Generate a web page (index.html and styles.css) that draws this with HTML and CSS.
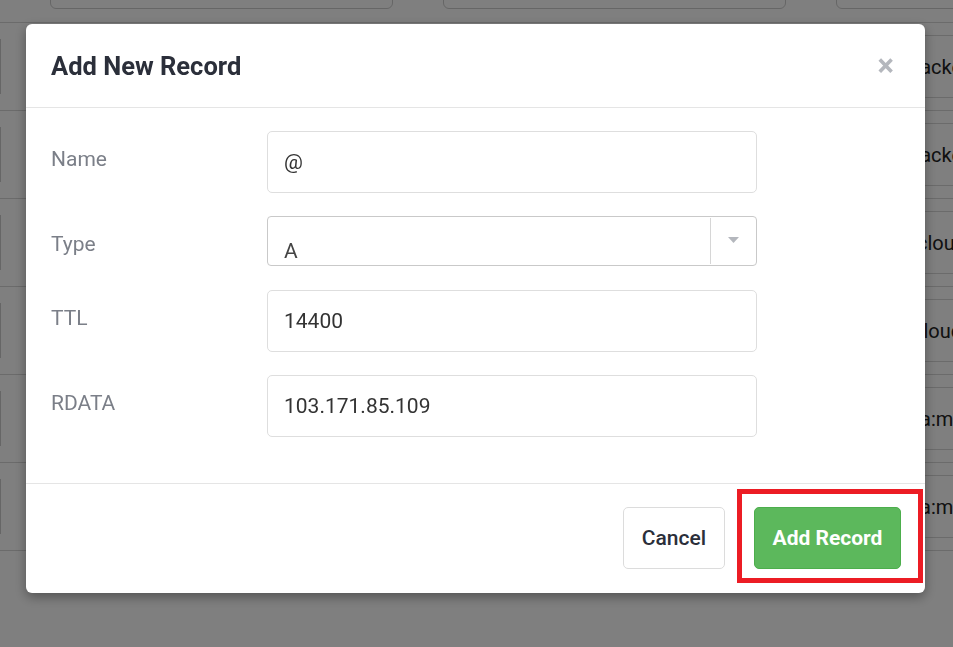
FILE: index.html
```html
<!DOCTYPE html>
<html lang="en">
<head>
<meta charset="utf-8">
<title>Add New Record</title>
<link rel="stylesheet" href="styles.css">
</head>
<body>
<div class="page">
  <div class="topbar">
    <div class="topbox"></div>
    <div class="topbox"></div>
    <div class="topbox wide"></div>
  </div>
  <div class="row"><div class="lbox"></div><div class="rbox"><span>backend</span></div></div>
  <div class="row"><div class="lbox"></div><div class="rbox"><span>backend</span></div></div>
  <div class="row"><div class="lbox"></div><div class="rbox"><span class="shift-lg">cloud</span></div></div>
  <div class="row"><div class="lbox"></div><div class="rbox"><span class="shift-sm">cloud</span></div></div>
  <div class="row"><div class="lbox"></div><div class="rbox"><span>ha:mx</span></div></div>
  <div class="row"><div class="lbox"></div><div class="rbox"><span>ha:mx</span></div></div>
</div>

<div class="overlay">
  <div class="modal">
    <div class="modal-header">
      <h4 class="modal-title">Add New Record</h4>
      <span class="close">&times;</span>
    </div>
    <div class="modal-body">
      <div class="group">
        <label class="label">Name</label>
        <div class="input">@</div>
      </div>
      <div class="group group-type">
        <label class="label">Type</label>
        <div class="select">
          <span class="select-value">A</span>
          <span class="select-arrow"><svg width="11" height="6" viewBox="0 0 11 6"><path d="M0 0H11L5.5 6Z" fill="#b4b7bd"/></svg></span>
        </div>
      </div>
      <div class="group">
        <label class="label">TTL</label>
        <div class="input">14400</div>
      </div>
      <div class="group">
        <label class="label">RDATA</label>
        <div class="input">103.171.85.109</div>
      </div>
    </div>
    <div class="modal-footer">
      <button class="btn btn-default">Cancel</button>
      <button class="btn btn-success">Add Record</button>
      <div class="highlight"></div>
    </div>
  </div>
</div>
</body>
</html>
```

FILE: styles.css
```css
* { box-sizing: border-box; }
html, body { margin: 0; padding: 0; }
body {
  width: 953px;
  height: 647px;
  overflow: hidden;
  font-family: Roboto, "Liberation Sans", Arial, sans-serif;
  background: #fff;
  color: #333;
}

/* background page */
.page { width: 953px; overflow: hidden; }
.topbar {
  height: 23px;
  border-bottom: 1px solid #d6d6d6;
  display: flex;
  gap: 50px;
  padding-left: 50px;
  overflow: hidden;
}
.topbox {
  width: 343px;
  height: 30px;
  margin-top: -21px;
  border: 1px solid #ccc;
  border-radius: 6px;
  flex: none;
}
.topbox.wide { width: 300px; }
.row {
  height: 88px;
  border-bottom: 1px solid #d6d6d6;
  display: flex;
  justify-content: space-between;
}
.lbox {
  width: 1px;
  margin-top: 16px;
  height: 55px;
  background: #ccc;
}
.rbox {
  margin-top: 12px;
  height: 63px;
  width: 40px;
  overflow: hidden;
  border-top: 1px solid #d6d6d6;
  border-bottom: 1px solid #d6d6d6;
  display: flex;
  align-items: center;
  font-size: 20px;
  color: #222;
  white-space: nowrap;
}
.rbox span { margin-left: -4px; }
.rbox span.shift-lg { margin-left: 4px; }
.rbox span.shift-sm { margin-left: 0; }

/* overlay + modal */
.overlay {
  position: fixed;
  inset: 0;
  background: rgba(0, 0, 0, 0.5);
  padding: 24px 0 0 26px;
}
.modal {
  width: 899px;
  background: #fff;
  border-radius: 6px;
  box-shadow: 0 4px 12px rgba(0, 0, 0, 0.35);
}
.modal-header {
  height: 84px;
  border-bottom: 1px solid #e5e5e5;
  display: flex;
  align-items: center;
  justify-content: space-between;
  padding: 0 31px 0 25px;
}
.modal-title {
  margin: 0;
  font-size: 25.5px;
  font-weight: 700;
  color: #2b2f3a;
  line-height: 1;
  padding-top: 2px;
}
.close {
  font-size: 31px;
  font-weight: 700;
  color: #b4b7bd;
  line-height: 1;
  margin-top: 0;
}
.modal-body {
  padding: 23px 25px 23px;
}
.group {
  display: grid;
  grid-template-columns: 216px 490px;
  margin-bottom: 23px;
}
.group-type { margin-bottom: 24px; }
.label {
  font-size: 21px;
  color: #7b7f88;
  line-height: 28px;
  padding-top: 14px;
}
.input {
  height: 62px;
  border: 1px solid #dedede;
  border-radius: 5px;
  padding: 0 16px;
  font-size: 21px;
  color: #333;
  display: flex;
  align-items: center;
}
.select {
  height: 50px;
  border: 1px solid #c9c9c9;
  border-radius: 4px;
  display: flex;
}
.select-value {
  flex: 1;
  font-size: 21px;
  color: #444;
  line-height: 28px;
  padding: 20px 16px 0;
}
.select-arrow {
  width: 46px;
  margin: 1px 0;
  border-left: 1px solid #d6d6d6;
  display: flex;
  align-items: center;
  justify-content: center;
  padding-bottom: 2px;
}
.select-arrow svg { display: block; }
.modal-footer {
  position: relative;
  border-top: 1px solid #e5e5e5;
  padding: 23px 24px 24px;
  display: flex;
  justify-content: flex-end;
  gap: 29px;
}
.btn {
  height: 62px;
  border-radius: 5px;
  font-family: inherit;
  font-size: 21px;
  cursor: pointer;
}
.btn-default {
  width: 102px;
  background: #fff;
  border: 1px solid #dcdcdc;
  color: #2b2f3a;
  font-weight: 500;
}
.btn-success {
  width: 147px;
  background: #5cb85c;
  border: 1px solid #4cae4c;
  color: #fff;
  font-weight: 700;
}
.highlight {
  position: absolute;
  left: 711px;
  top: 5px;
  width: 186px;
  height: 94px;
  border: 5px solid #ec1c24;
  pointer-events: none;
}
```
